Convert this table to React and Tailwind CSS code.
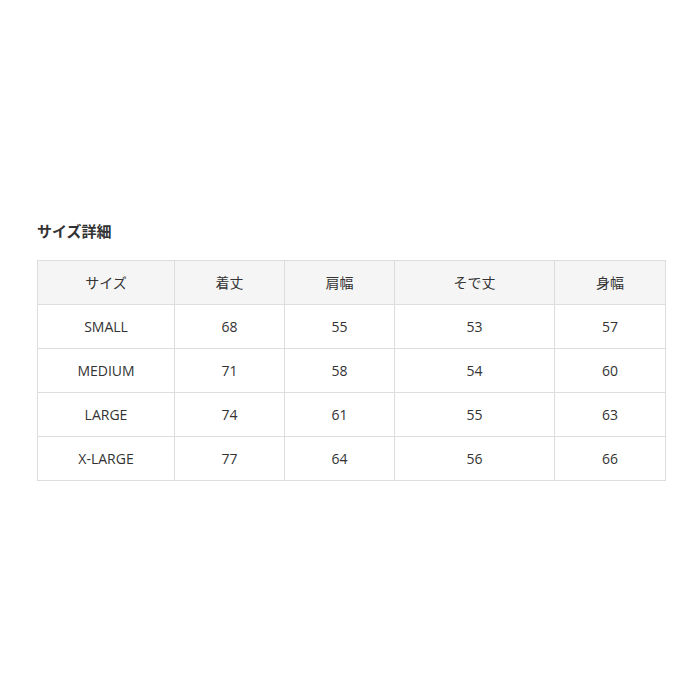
import React from 'react';

const headers = ['サイズ', '着丈', '肩幅', 'そで丈', '身幅'];
const rows = [
  ['SMALL', 68, 55, 53, 57],
  ['MEDIUM', 71, 58, 54, 60],
  ['LARGE', 74, 61, 55, 63],
  ['X-LARGE', 77, 64, 56, 66],
];
const widths = ['w-[137px]', 'w-[110px]', 'w-[110px]', 'w-[160px]', 'w-[111px]'];

export default function App() {
  return (
    <div
      className="w-[700px] h-[700px] bg-white text-[#333] pt-[220px] pl-[37px]"
      style={{ fontFamily: '"Open Sans", "Noto Sans CJK JP", sans-serif' }}
    >
      <h2 className="text-[15px] font-bold leading-[22px] mb-[18px]">サイズ詳細</h2>
      <table className="border-collapse w-[628px] table-fixed text-[14px]">
        <thead>
          <tr className="h-[44px] bg-[#f5f5f5]">
            {headers.map((h, i) => (
              <th key={h} className={`${widths[i]} border border-[#dddddd] font-normal text-center`}>
                {h}
              </th>
            ))}
          </tr>
        </thead>
        <tbody>
          {rows.map((r) => (
            <tr key={r[0]} className="h-[44px]">
              {r.map((c, i) => (
                <td key={i} className="border border-[#dddddd] text-center">
                  {c}
                </td>
              ))}
            </tr>
          ))}
        </tbody>
      </table>
    </div>
  );
}
